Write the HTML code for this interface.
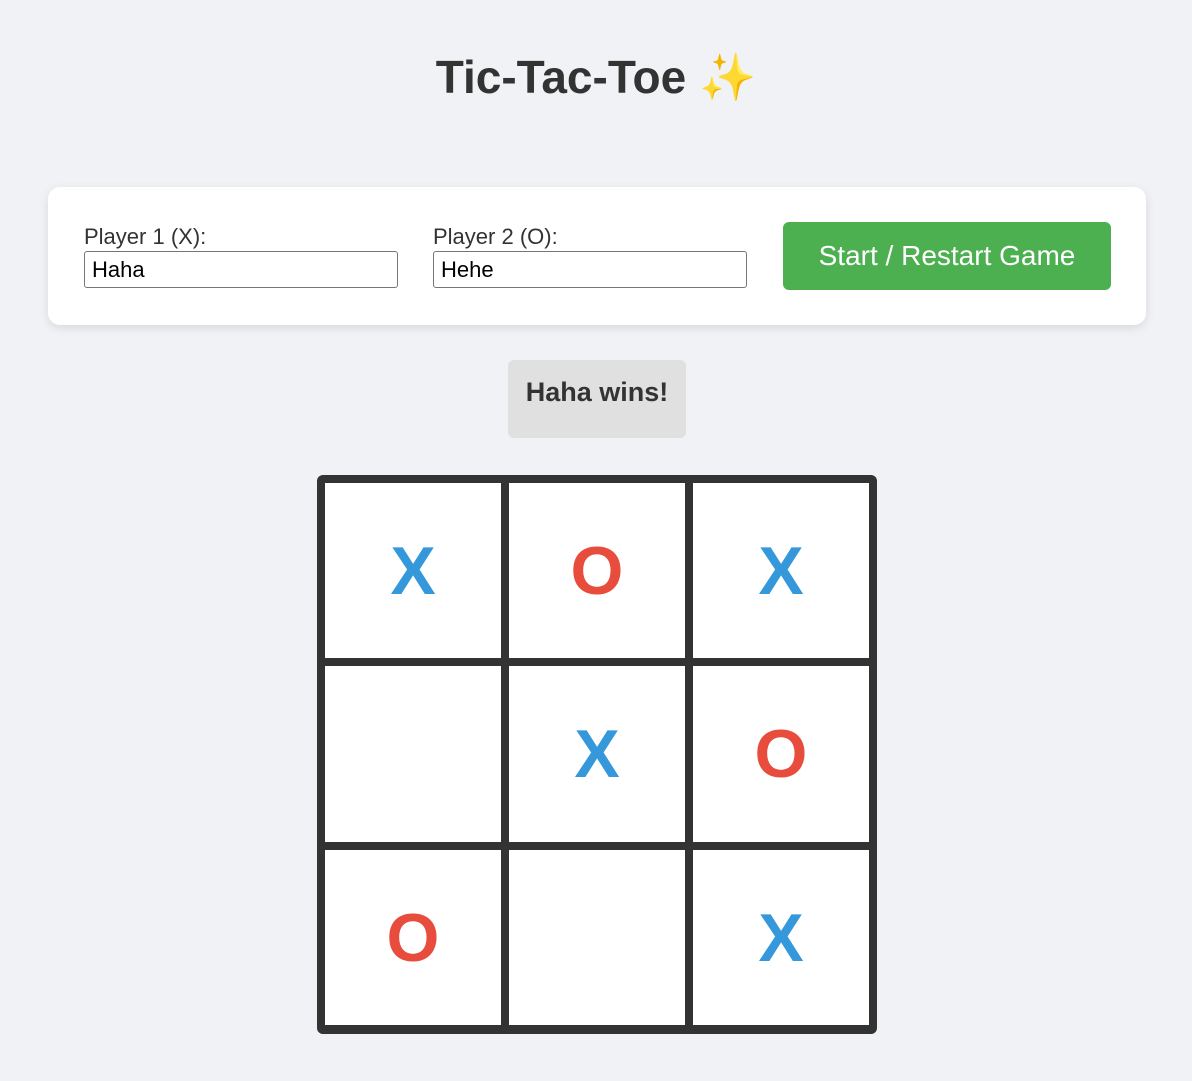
<!DOCTYPE html>
<html><head><meta charset="utf-8"><style>
*{box-sizing:border-box;margin:0;padding:0}
body{width:1192px;height:1081px;background:#f0f2f5;font-family:"Liberation Sans",Arial,sans-serif;color:#333;position:relative;overflow:hidden}
h1{position:absolute;top:48px;left:0;width:1192px;text-align:center;font-size:46px;font-weight:bold;color:#333;line-height:58px}
.panel{position:absolute;left:48px;top:187px;width:1098px;height:138px;background:#fff;border-radius:12px;box-shadow:0 3px 10px rgba(0,0,0,0.1)}
.lbl{position:absolute;top:223px;font-size:22px;color:#333;line-height:28px}
.inp{position:absolute;top:251px;width:314px;height:37px;border:1px solid #767676;border-radius:3px;background:#fff;font-size:22px;color:#000;padding-left:7px;line-height:35px}
.btn{position:absolute;left:783px;top:222px;width:328px;height:68px;background:#4caf50;border-radius:6px;color:#fff;font-size:28px;text-align:center;line-height:68px}
.status{position:absolute;left:508px;top:360px;width:178px;height:78px;background:#e0e0e0;border-radius:6px;font-size:27px;font-weight:bold;text-align:center;padding-top:17px;line-height:31px}
.board{position:absolute;left:317px;top:475px;width:560px;height:559px;background:#333;border-radius:6px;padding:8px;display:grid;grid-template-columns:176px 176px 176px;grid-template-rows:175px 176px 175px;gap:8px 8px}
.c{background:#fff;display:flex;align-items:center;justify-content:center;font-size:68px;font-weight:bold}
.x{color:#3498db}.o{color:#e74c3c}
</style></head><body>
<h1>Tic-Tac-Toe ✨</h1>
<div class="panel"></div>
<div class="lbl" style="left:84px">Player 1 (X):</div>
<div class="inp" style="left:84px">Haha</div>
<div class="lbl" style="left:433px">Player 2 (O):</div>
<div class="inp" style="left:433px">Hehe</div>
<div class="btn">Start / Restart Game</div>
<div class="status">Haha wins!</div>
<div class="board">
<div class="c x">X</div><div class="c o">O</div><div class="c x">X</div>
<div class="c"></div><div class="c x">X</div><div class="c o">O</div>
<div class="c o">O</div><div class="c"></div><div class="c x">X</div>
</div>
</body></html>
